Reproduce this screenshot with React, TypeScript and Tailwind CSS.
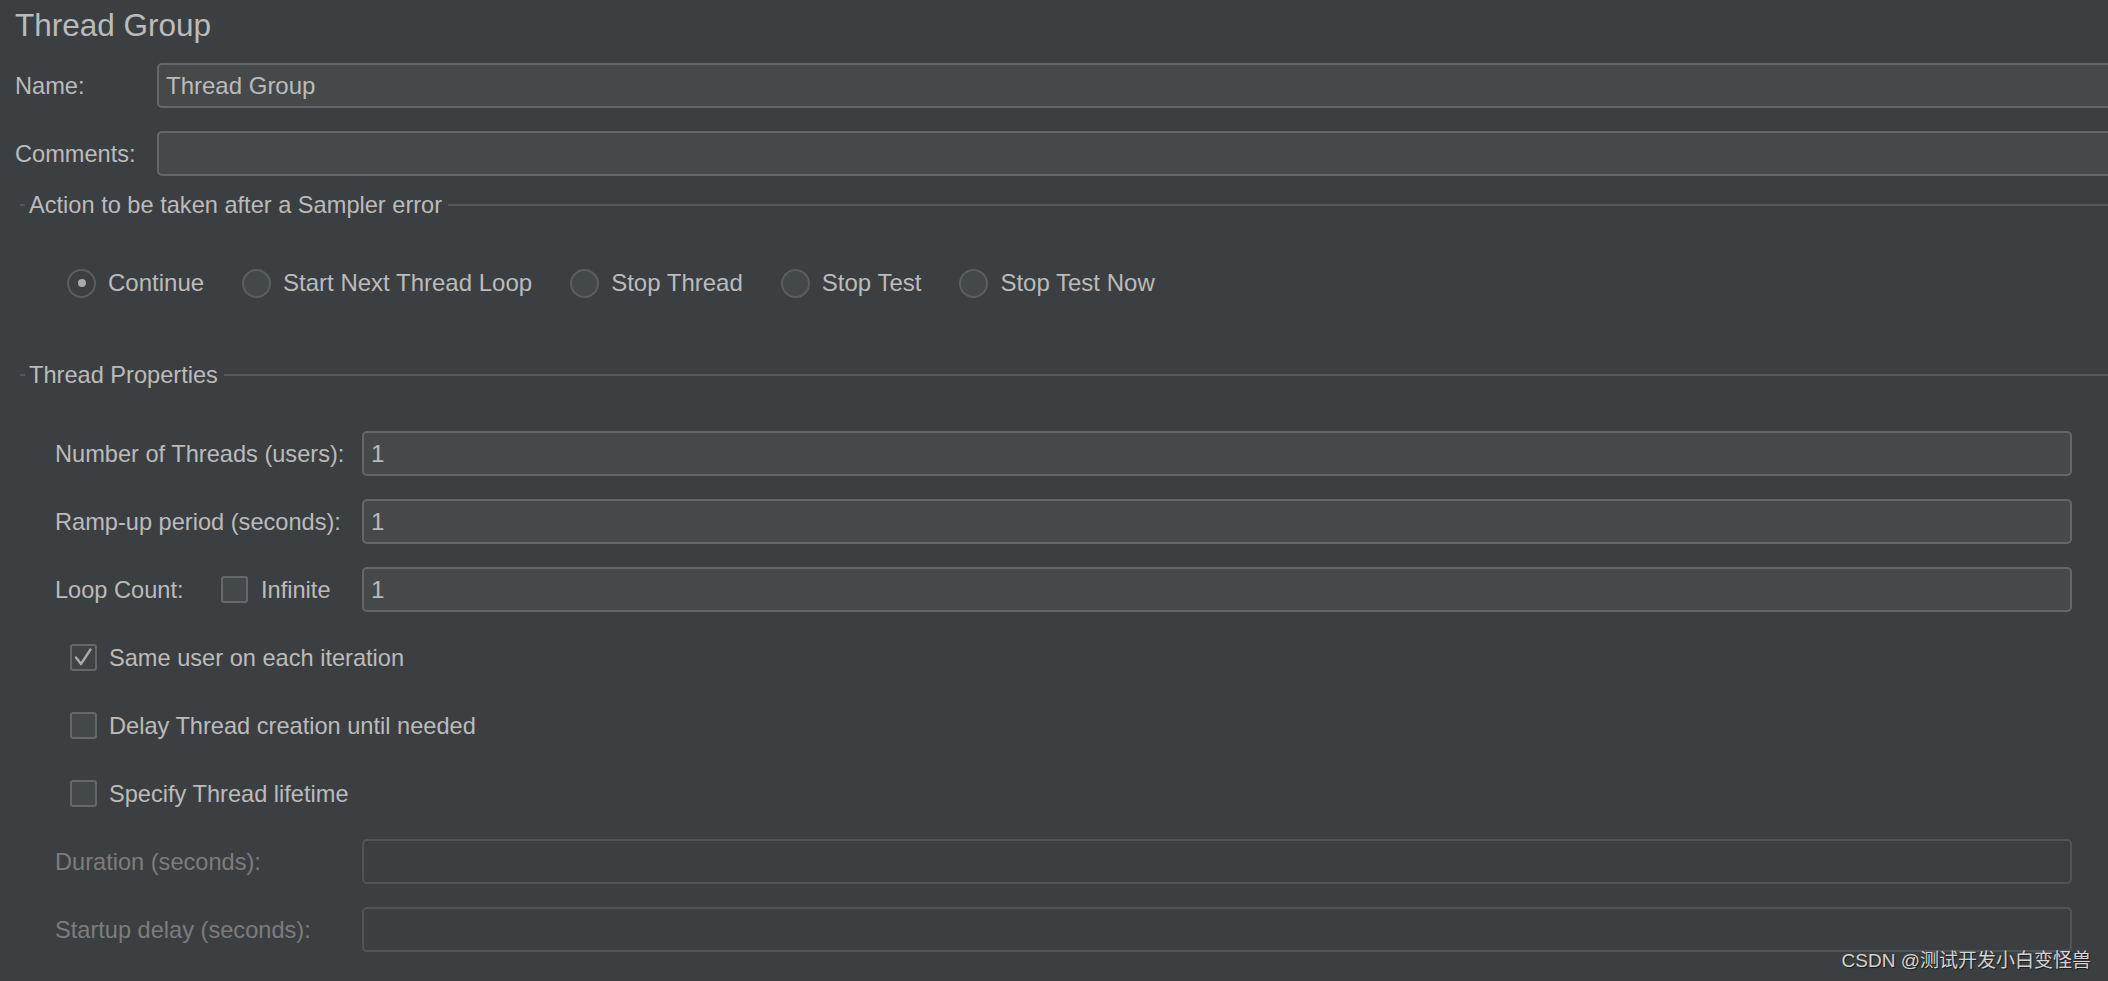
import React from "react";

const TXT = "text-[23.6px] leading-[28px]";
const FIELD = "h-[45px] rounded-[5px] border-2 border-[#646767] bg-[#45494a] flex items-center pl-[7px] text-[24px] leading-[28px] text-[#bbbbbb]";
const FIELD_OFF = "h-[45px] rounded-[5px] border-2 border-[#515455] bg-[#3c3f41]";

function TitledLine({ label, className }: { label: string; className?: string }) {
  // Swing TitledBorder: short dash, caption, then a line across
  return (
    <div className={"flex items-center h-[28px] " + (className ?? "")}>
      <span className="ml-[20px] w-[5px] h-[2px] bg-[#55585a]" />
      <span className={"ml-[4px] whitespace-nowrap " + TXT}>{label}</span>
      <span className="ml-[6px] flex-1 h-[2px] bg-[#55585a]" />
    </div>
  );
}

function Radio({ label, checked }: { label: string; checked?: boolean }) {
  return (
    <div className="flex items-center">
      <span
        className={
          "w-[29px] h-[29px] rounded-full border-2 border-[#5b5e60] flex items-center justify-center " +
          (checked ? "bg-[#3c3f41]" : "bg-[#43484a]")
        }
      >
        {checked && <span className="w-[8px] h-[8px] rounded-full bg-[#aaaaaa]" />}
      </span>
      <span className="ml-[12px] text-[24px] leading-[28px] whitespace-nowrap">{label}</span>
    </div>
  );
}

function Box({ checked }: { checked?: boolean }) {
  return (
    <span
      className={
        "w-[27px] h-[27px] shrink-0 rounded-[3px] border-2 border-[#656869] flex items-center justify-center " +
        (checked ? "bg-[#3f4345]" : "bg-[#43484a]")
      }
    >
      {checked && (
        <svg width="23" height="23" viewBox="0 0 23 23" fill="none">
          <polyline
            points="4,11.5 9,18 18.5,3.5"
            stroke="#a9a9a9"
            strokeWidth="2.4"
            strokeLinecap="round"
            strokeLinejoin="round"
          />
        </svg>
      )}
    </span>
  );
}

function FieldRow({ label, value, disabled }: { label: string; value?: string; disabled?: boolean }) {
  return (
    <div className="flex items-center h-[45px]">
      <span className={"w-[307px] shrink-0 whitespace-nowrap " + TXT + (disabled ? " text-[#7a7d7f]" : "")}>
        {label}
      </span>
      {disabled ? (
        <div className={FIELD_OFF + " flex-1"} />
      ) : (
        <div className={FIELD + " flex-1"}>{value}</div>
      )}
    </div>
  );
}

function CheckRow({ label, checked }: { label: string; checked?: boolean }) {
  return (
    <div className="flex items-center h-[45px] pl-[15px]">
      <Box checked={checked} />
      <span className={"ml-[12px] whitespace-nowrap " + TXT}>{label}</span>
    </div>
  );
}

export default function App() {
  return (
    <div className="relative w-[2108px] h-[981px] overflow-hidden bg-[#3c3f41] text-[#bbbbbb] font-['Liberation_Sans',Arial,'Noto_Sans_CJK_SC',sans-serif]">
      {/* Header */}
      <h1 className="pt-[7px] pl-[15px] text-[31.5px] leading-[36px] font-normal">Thread Group</h1>

      <div className="mt-[20px] flex flex-col gap-[23px] pl-[15px] -mr-[30px]">
        <div className="flex items-center h-[45px]">
          <span className={"w-[142px] shrink-0 " + TXT}>Name:</span>
          <div className={FIELD + " flex-1"}>Thread Group</div>
        </div>
        <div className="flex items-center h-[45px]">
          <span className={"w-[142px] shrink-0 " + TXT}>Comments:</span>
          <div className={FIELD + " flex-1"} />
        </div>
      </div>

      {/* Sampler error action */}
      <TitledLine label="Action to be taken after a Sampler error" className="mt-[15px]" />
      <div className="mt-[49px] h-[30px] flex items-center gap-[38px] pl-[67px]">
        <Radio label="Continue" checked />
        <Radio label="Start Next Thread Loop" />
        <Radio label="Stop Thread" />
        <Radio label="Stop Test" />
        <Radio label="Stop Test Now" />
      </div>

      {/* Thread properties */}
      <TitledLine label="Thread Properties" className="mt-[63px]" />
      <div className="mt-[42px] flex flex-col gap-[23px] pl-[55px] pr-[36px]">
        <FieldRow label="Number of Threads (users):" value="1" />
        <FieldRow label="Ramp-up period (seconds):" value="1" />
        <div className="flex items-center h-[45px]">
          <div className="w-[307px] shrink-0 flex items-center">
            <span className={"w-[166px] " + TXT}>Loop Count:</span>
            <Box />
            <span className={"ml-[13px] " + TXT}>Infinite</span>
          </div>
          <div className={FIELD + " flex-1"}>1</div>
        </div>
        <CheckRow label="Same user on each iteration" checked />
        <CheckRow label="Delay Thread creation until needed" />
        <CheckRow label="Specify Thread lifetime" />
        <FieldRow label="Duration (seconds):" disabled />
        <FieldRow label="Startup delay (seconds):" disabled />
      </div>

      <div className="absolute right-[17px] top-[949px] text-[19px] leading-[24px] text-[#d4d4d4] whitespace-nowrap [text-shadow:1px_1px_1px_#1a1a1a]">
        CSDN @测试开发小白变怪兽
      </div>
    </div>
  );
}
